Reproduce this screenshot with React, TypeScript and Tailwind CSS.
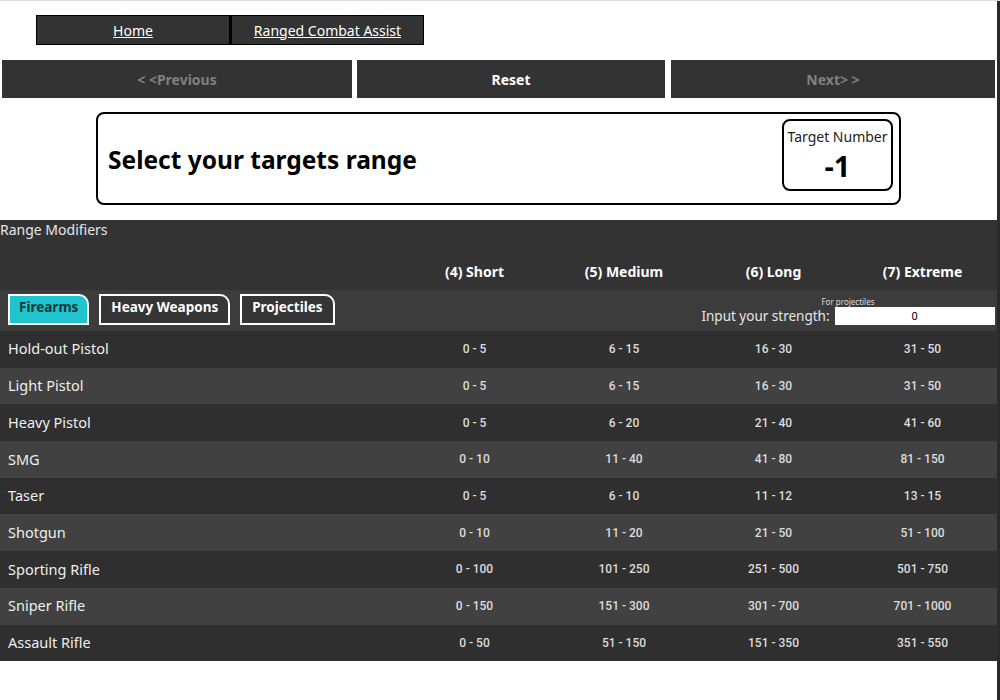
import React from "react";

type Weapon = { name: string; ranges: string[] };

const weapons: Weapon[] = [
  { name: "Hold-out Pistol", ranges: ["0 - 5", "6 - 15", "16 - 30", "31 - 50"] },
  { name: "Light Pistol", ranges: ["0 - 5", "6 - 15", "16 - 30", "31 - 50"] },
  { name: "Heavy Pistol", ranges: ["0 - 5", "6 - 20", "21 - 40", "41 - 60"] },
  { name: "SMG", ranges: ["0 - 10", "11 - 40", "41 - 80", "81 - 150"] },
  { name: "Taser", ranges: ["0 - 5", "6 - 10", "11 - 12", "13 - 15"] },
  { name: "Shotgun", ranges: ["0 - 10", "11 - 20", "21 - 50", "51 - 100"] },
  { name: "Sporting Rifle", ranges: ["0 - 100", "101 - 250", "251 - 500", "501 - 750"] },
  { name: "Sniper Rifle", ranges: ["0 - 150", "151 - 300", "301 - 700", "701 - 1000"] },
  { name: "Assault Rifle", ranges: ["0 - 50", "51 - 150", "151 - 350", "351 - 550"] },
];

const headers = ["(4) Short", "(5) Medium", "(6) Long", "(7) Extreme"];
const tabs = ["Firearms", "Heavy Weapons", "Projectiles"];

const cols = "grid grid-cols-[400px_149px_150px_149px_149px]";

const App = () => {
  const [tab, setTab] = React.useState("Firearms");
  const [strength, setStrength] = React.useState("0");

  return (
    <div className="w-[1000px] h-[700px] bg-white border-t border-[#dddddd] font-['Noto_Sans','Open_Sans',sans-serif] text-[14px] overflow-hidden">
      <div className="border-r-[3px] border-[#2a2a2a] h-full w-[1000px]">
        {/* nav */}
        <div className="flex pt-[14px] pl-[36px]">
          <a href="#" className="w-[194px] h-[30px] flex items-center justify-center bg-[#333333] border border-black text-white underline">
            Home
          </a>
          <a href="#" className="w-[194px] h-[30px] flex items-center justify-center bg-[#333333] border border-black border-l-2 text-white underline">
            Ranged Combat Assist
          </a>
        </div>

        {/* step buttons */}
        <div className="flex gap-[5px] pt-[15px] pl-[2px]">
          <button className="w-[350px] h-[38px] bg-[#333333] text-[#808080] font-bold">&lt; &lt;Previous</button>
          <button className="w-[308px] h-[38px] bg-[#333333] text-white font-bold">Reset</button>
          <button className="w-[324px] h-[38px] ml-[1px] bg-[#333333] text-[#808080] font-bold">Next&gt; &gt;</button>
        </div>

        {/* target card */}
        <div className="ml-[96px] mt-[14px] w-[805px] h-[93px] border-2 border-black rounded-[8px] flex items-start justify-between pl-[10px] pr-[6px] pt-[5px]">
          <h1 className="mt-[23px] text-[24.5px] font-bold text-black">Select your targets range</h1>
          <div className="w-[111px] h-[72px] border-2 border-black rounded-[8px] flex flex-col items-center pt-[7px]">
            <span className="text-[14px] text-[#222222] leading-[18px]">Target Number</span>
            <span className="text-[29px] font-bold leading-[40px] text-black">-1</span>
          </div>
        </div>

        {/* range table */}
        <div className="mt-[15px] w-[997px] bg-[#333333] text-[#eeeeee]">
          <div className="h-[20px] text-[14px] leading-[20px] text-[#e6e6e6]">Range Modifiers</div>
          <div className={`${cols} h-[50px] items-end pb-[8px]`}>
            <div />
            {headers.map((h) => (
              <div key={h} className="text-center font-bold text-[14px] text-white">
                {h}
              </div>
            ))}
          </div>

          <div className={`${cols} h-[41px] bg-[#3c3c3c]`}>
            <div className="col-span-3 flex items-start gap-[10px] pl-[8px] pt-[4px]">
              {tabs.map((t) => (
                <button
                  key={t}
                  onClick={() => setTab(t)}
                  className={
                    t === tab
                      ? "h-[31px] px-[9px] pb-[4px] border-2 border-white rounded-tr-[10px] bg-[#1fc4cc] text-[#163838] font-bold text-[13.5px]"
                      : "h-[31px] px-[10px] pb-[4px] border-2 border-white rounded-tr-[10px] bg-[#353535] text-white font-bold text-[13.5px]"
                  }
                >
                  {t}
                </button>
              ))}
            </div>
            <div className="col-span-2 flex flex-col items-center pt-[7px]">
              <span className="text-[8px] leading-[10px] text-[#dddddd]">For projectiles</span>
              <div className="flex items-center gap-[5px] whitespace-nowrap">
                <span className="text-[13.5px] leading-[18px] text-[#e6e6e6]">Input your strength:</span>
                <input
                  value={strength}
                  onChange={({ target: { value } }) => setStrength(value)}
                  className="w-[160px] h-[18px] bg-white text-black text-[11px] text-center font-['Roboto',sans-serif] outline-none"
                />
              </div>
            </div>
          </div>

          {weapons.map((w, i) => (
            <div key={w.name} className={`${cols} h-[36.7px] items-center ${i % 2 === 0 ? "bg-[#2f2f2f]" : "bg-[#414141]"}`}>
              <div className="pl-[8px] text-[14.5px] text-[#eeeeee]">{w.name}</div>
              {w.ranges.map((r, j) => (
                <div key={j} className="text-center text-[12px] font-medium font-['Roboto',sans-serif] text-[#dddddd]">
                  {r}
                </div>
              ))}
            </div>
          ))}
        </div>
      </div>
    </div>
  );
};

export default App;
